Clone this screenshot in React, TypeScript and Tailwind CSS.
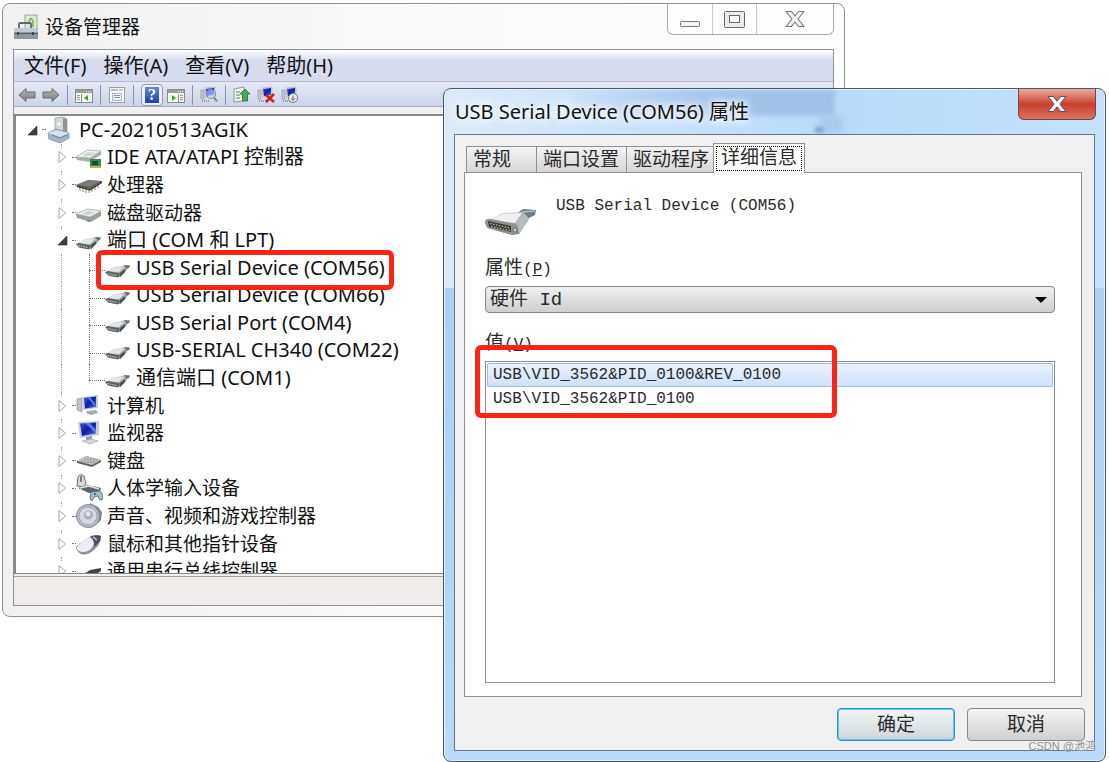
import { useState, type ReactNode } from 'react'
import clsx from 'clsx'

type NodeKind =
  | 'root'
  | 'ide'
  | 'cpu'
  | 'disk'
  | 'port'
  | 'computer'
  | 'monitor'
  | 'keyboard'
  | 'hid'
  | 'sound'
  | 'mouse'
  | 'usb'

interface TreeNode {
  label: string
  kind: NodeKind
  level: 0 | 1 | 2
  open?: boolean
  last?: boolean
  marked?: boolean
}

const nodes: TreeNode[] = [
  { label: 'PC-20210513AGIK', kind: 'root', level: 0, open: true },
  { label: 'IDE ATA/ATAPI 控制器', kind: 'ide', level: 1 },
  { label: '处理器', kind: 'cpu', level: 1 },
  { label: '磁盘驱动器', kind: 'disk', level: 1 },
  { label: '端口 (COM 和 LPT)', kind: 'port', level: 1, open: true },
  { label: 'USB Serial Device (COM56)', kind: 'port', level: 2, marked: true },
  { label: 'USB Serial Device (COM66)', kind: 'port', level: 2 },
  { label: 'USB Serial Port (COM4)', kind: 'port', level: 2 },
  { label: 'USB-SERIAL CH340 (COM22)', kind: 'port', level: 2 },
  { label: '通信端口 (COM1)', kind: 'port', level: 2, last: true },
  { label: '计算机', kind: 'computer', level: 1 },
  { label: '监视器', kind: 'monitor', level: 1 },
  { label: '键盘', kind: 'keyboard', level: 1 },
  { label: '人体学输入设备', kind: 'hid', level: 1 },
  { label: '声音、视频和游戏控制器', kind: 'sound', level: 1 },
  { label: '鼠标和其他指针设备', kind: 'mouse', level: 1 },
  { label: '通用串行总线控制器', kind: 'usb', level: 1 },
]

const menus = ['文件(F)', '操作(A)', '查看(V)', '帮助(H)']

const hardwareIds = ['USB\\VID_3562&PID_0100&REV_0100', 'USB\\VID_3562&PID_0100']

const tabs = [
  { label: '常规', width: 'w-[70px]' },
  { label: '端口设置', width: 'w-[90px]' },
  { label: '驱动程序', width: 'w-[87px]' },
  { label: '详细信息', width: 'w-[92px]' },
]

// Shared gradients for every icon on the page
function Gradients() {
  return (
    <svg width="0" height="0" className="absolute" aria-hidden="true">
      <defs>
        <linearGradient id="metal" x1="0" y1="0" x2="1" y2="1">
          <stop offset="0" stopColor="#f4f5f5" />
          <stop offset="0.5" stopColor="#b4b8ba" />
          <stop offset="1" stopColor="#5f6467" />
        </linearGradient>
        <linearGradient id="screen" x1="0" y1="0" x2="1" y2="1">
          <stop offset="0" stopColor="#3a55d8" />
          <stop offset="0.5" stopColor="#0a1cae" />
          <stop offset="1" stopColor="#4c7df0" />
        </linearGradient>
        <linearGradient id="arrow" x1="0" y1="0" x2="0" y2="1">
          <stop offset="0" stopColor="#b9b9b9" />
          <stop offset="1" stopColor="#7c7c7c" />
        </linearGradient>
      </defs>
    </svg>
  )
}

function DeviceArt({ kind }: { kind: NodeKind }) {
  switch (kind) {
    case 'root':
      return (
        <>
          <path d="M9 0 17 -1 21 1V16L12 17 9 14Z" fill="#d4d8da" stroke="#8f9598" strokeWidth="0.7" />
          <path d="M17 0 21 1V16L17 16Z" fill="#8f9497" />
          <circle cx="13" cy="6" r="1.5" fill="#fff" />
          <path d="M2 15 10 11 23 15 23 20 14 25 3 21Z" fill="#9db8c8" stroke="#6f8b9c" strokeWidth="0.7" />
          <path d="M2 15 10 12 23 15 14 19Z" fill="#d5e5ee" />
          <path d="M6 17 14 20M14 20 21 17" stroke="#5a7a8e" strokeWidth="0.8" fill="none" />
        </>
      )
    case 'ide':
      return (
        <>
          <path d="M0 12 11 5 25 6 25 10 13 17 1 15Z" fill="#a9aeac" />
          <path d="M0 12 11 5 25 6 14 13Z" fill="#eef0ee" stroke="#9ea3a1" strokeWidth="0.6" />
          <path d="M6 11 12 7 20 8 14 11Z" fill="#cfd4d1" />
          <path d="M14 14H25V23H14Z" fill="#3d8a41" />
          <path d="M16 16H22V20H16Z" fill="#1d4a52" />
          <path d="M14 21H25V23H14Z" fill="#c9b33c" />
        </>
      )
    case 'cpu':
      return (
        <>
          <path d="M4 14v4M7 15v4M10 16v4M13 16v4M16 15v4M19 13v4M22 11v4" stroke="#a49a72" strokeWidth="1.2" />
          <path d="M0 12 12 7 26 8 14 16Z" fill="#5c5a5a" />
          <path d="M2 11.500 12 7.500 24 8 14 14Z" fill="#7f7c7c" />
          <path d="M0 12 14 16 26 8V10L14 17.500 1 14Z" fill="#312f30" />
        </>
      )
    case 'disk':
      return (
        <>
          <path d="M0 13 11 8 25 10V15L15 21 1 17Z" fill="#9a9f9c" />
          <path d="M0 13 11 8 25 10 14 16Z" fill="#eceeed" stroke="#a5aaa7" strokeWidth="0.6" />
          <path d="M6 13 12 10 19 11 13 14Z" fill="#cdd2cf" />
          <path d="M11 19.500 14 20.200" stroke="#3fae45" strokeWidth="1.4" />
        </>
      )
    case 'computer':
      return (
        <>
          <path d="M1 5 6 4V18L1 16Z" fill="#bfc4c7" stroke="#7f8589" strokeWidth="0.6" />
          <path d="M6 3 22 1V14L7 16Z" fill="#c9ced4" />
          <path d="M8 4 20 2.500V13L9 14.500Z" fill="url(#screen)" />
          <path d="M12 4 14 3.500 19 10V12Z" fill="#8fb2f8" opacity="0.7" />
          <path d="M11 17 20 16 22 19 15 21 10 19Z" fill="#a5abb0" />
        </>
      )
    case 'monitor':
      return (
        <>
          <path d="M2 1 23 0V14L4 17Z" fill="#c9ced4" />
          <path d="M4 2.500 20 1.500V12.500L6 15Z" fill="url(#screen)" />
          <path d="M9 2 14 2 20 9V12.500Z" fill="#7fa6f6" opacity="0.65" />
          <path d="M10 16 16 15V19H10Z" fill="#999fa4" />
          <path d="M6 20 15 18 22 20 14 23Z" fill="#d2d6d9" stroke="#9aa0a4" strokeWidth="0.6" />
        </>
      )
    case 'keyboard':
      return (
        <>
          <path d="M1 12 10 7 25 11V13L16 18 1 14Z" fill="#5e6163" />
          <path d="M1 12 10 7 25 11 16 16Z" fill="#c3c6c8" />
          <path d="M5 12 18 14M8 10 20 13M11 9 22 11.500" stroke="#8d8f91" strokeWidth="1" strokeDasharray="2 1" />
        </>
      )
    case 'hid':
      return (
        <>
          <path d="M2 1Q4-3 8 0L10 8 7 11 1 10Z" fill="#d9dcdd" stroke="#6a6e70" strokeWidth="1" />
          <path d="M5 0V6" stroke="#55585a" strokeWidth="1.400" />
          <path d="M2 12 12 9 25 12 23 18 13 17Z" fill="#5f6365" />
          <path d="M4 12 13 10 23 13" stroke="#e1e4e5" strokeWidth="1.600" fill="none" />
          <path d="M15 16 24 15Q28 18 26 24L23 23 22 20 18 21 16 25 14 23Z" fill="#a6bcc4" stroke="#566a72" strokeWidth="0.8" />
          <circle cx="19" cy="18" r="1.200" fill="#1f7fae" />
        </>
      )
    case 'sound':
      return (
        <>
          <path d="M14-1 22 3 26 8 25 16 20 21 14 24Z" fill="#80848d" />
          <circle cx="12" cy="12" r="11.500" fill="#b7bcc7" stroke="#858b98" strokeWidth="1" />
          <circle cx="12" cy="12" r="9" fill="#d5d9e2" stroke="#9da4b3" strokeWidth="1" />
          <circle cx="12.500" cy="11" r="4.500" fill="#a7aebd" />
          <circle cx="12" cy="10" r="2.500" fill="#dfe3ea" />
        </>
      )
    case 'mouse':
      return (
        <>
          <path d="M15 4Q20 2 25 4 25 12 18 18 11 24 5 22 0 19 0 15 3 12 15 4Z" fill="#8d9098" />
          <path d="M14 5Q18 7 18 12 14 21 6 20 0 19 1 15 4 11 14 5Z" fill="#eceef1" />
          <path d="M14 5Q20 2 25 4L24 9 18 15Q19 8 14 5Z" fill="#4c4f56" />
          <path d="M17 5 21 8" stroke="#9fb3f0" strokeWidth="1.600" />
        </>
      )
    case 'usb':
      return <path d="M8 15 14 11 25 9V12L16 18 4 18Z" fill="#444" />
    default:
      return (
        <>
          <path d="M16 11 20 9 25 9.500 24 12 19 14Z" fill="#64707a" />
          <path d="M1 16 9 11 20 10 22 14 15 21 5 20Z" fill="url(#metal)" />
          <path d="M3 15 10 11.500 19 11 14 16Z" fill="#e4e7e8" />
          <path d="M0 16 3 15 15 17.500 13 21.500 3 19.500Z" fill="#5b6063" />
          <path d="M2.500 17.500 12 19.500" stroke="#c4c7bd" strokeWidth="1.200" strokeDasharray="1.500 1" />
          <path d="M15 17 20 13V16L15 21Z" fill="#4a4f52" />
        </>
      )
  }
}

function DeviceIcon({ kind }: { kind: NodeKind }) {
  return (
    <svg viewBox="0 0 26 24" className="h-6 w-[26px] shrink-0 overflow-visible" aria-hidden="true">
      <DeviceArt kind={kind} />
    </svg>
  )
}

function Expander({ open, label }: { open?: boolean; label: string }) {
  return (
    <button type="button" aria-label={label} className="relative z-10 h-4 w-[10px] shrink-0 bg-white">
      <svg viewBox="0 0 10 16" className="h-4 w-[10px]">
        {open ? (
          <path d="M9 4V13H0Z" fill="#404040" stroke="#222" strokeWidth="0.6" />
        ) : (
          <path d="M1 2.500V13.500L7.500 8Z" fill="#fff" stroke="#a6a6a6" strokeWidth="1" />
        )}
      </svg>
    </button>
  )
}

function TreeRow({ node }: { node: TreeNode }) {
  // Latin glyphs run small next to the CJK ones, so mixed labels go up a size
  const hasLatin = /[A-Z]/.test(node.label)

  return (
    <li
      className={clsx(
        'relative flex min-h-0 items-center',
        node.level === 0 && 'pl-[12px]',
        node.level === 1 && 'pl-[42px]',
        node.level === 2 && 'pl-[89px]'
      )}
    >
      {node.level > 0 && (
        <span
          className={clsx(
            'absolute left-[45px] border-l border-dotted border-gray-400',
            node.level === 2 ? 'inset-y-0' : 'top-0 h-1'
          )}
        />
      )}
      {node.level === 2 && (
        <>
          <span
            className={clsx(
              'absolute top-0 left-[73px] border-l border-dotted border-gray-500',
              node.last ? 'h-4' : 'bottom-0'
            )}
          />
          <span className="absolute top-4 left-[73px] w-4 border-t border-dotted border-gray-500" />
        </>
      )}
      {node.level < 2 && (
        <>
          <Expander open={node.open} label={node.label} />
          <span className="w-2 shrink-0 pl-1">
            <span className="block w-1 border-t border-dotted border-gray-500" />
          </span>
        </>
      )}
      <DeviceIcon kind={node.kind} />
      <span
        className={clsx(
          'whitespace-nowrap',
          hasLatin ? 'text-[20px] leading-6' : 'leading-6',
          node.level === 0 ? 'pl-[7px]' : 'pl-[5px]'
        )}
      >
        {node.label}
      </span>
      {node.marked && (
        <span className="absolute -top-1 left-[80px] z-20 h-10 w-[298px] rounded-md border-[5px] border-[#fb2414]" />
      )}
    </li>
  )
}

function ToolButton({ label, children }: { label: string; children: ReactNode }) {
  return (
    <button type="button" aria-label={label} className="flex h-5 w-[18px] items-center justify-center">
      <svg viewBox="0 0 18 18" className="h-[18px] w-[18px] overflow-visible">
        {children}
      </svg>
    </button>
  )
}

function Sep() {
  return <span className="mx-px h-5 w-px bg-[#8b93a5]" />
}

function PanelArt({ flip }: { flip?: boolean }) {
  return (
    <>
      <rect x="0.500" y="3.500" width="17" height="13" fill="#f7f7f4" stroke="#8d8d89" />
      <path d="M1 5.500H17" stroke="#9a9a96" strokeWidth="3" />
      <path d="M11 5.500H16" stroke="#efefef" strokeDasharray="1 1" />
      <path d={flip ? 'M11.500 8V16' : 'M6.500 8V16'} stroke="#8d8d89" />
      <path
        d={flip ? 'M13 9.500H16M13 11.500H16M13 13.500H16' : 'M2 9.500H5M2 11.500H5M2 13.500H5'}
        stroke="#999"
      />
      <path d={flip ? 'M5 9V15L9 12Z' : 'M13 9V15L9 12Z'} fill="#3fa52f" />
    </>
  )
}

function PcArt() {
  return (
    <>
      <path d="M1 4H4V13H1Z" fill="#c5c8cb" stroke="#8a8e92" strokeWidth="0.6" />
      <path d="M5 2 15 1V10L6 11Z" fill="#d3d7dd" stroke="#9ba1a9" strokeWidth="0.5" />
      <path d="M6 3 14 2V9L7 10Z" fill="url(#screen)" />
      <path d="M2 15H10" stroke="#999" strokeWidth="2" strokeDasharray="1 1" />
    </>
  )
}

function Toolbar() {
  return (
    <div className="flex h-[25px] items-end border-b border-[#a3aabb] bg-linear-to-b from-[#e4e9f5] to-[#ccd5e8] pl-1">
      <div className="flex items-center gap-1.5">
        <ToolButton label="后退">
          <path d="M1 9 8 2.500V6H17V12H8V15.500Z" fill="url(#arrow)" stroke="#6d6d6d" />
        </ToolButton>
        <ToolButton label="前进">
          <path d="M17 9 10 2.500V6H1V12H10V15.500Z" fill="url(#arrow)" stroke="#6d6d6d" />
        </ToolButton>
        <Sep />
        <ToolButton label="显示控制台树">
          <PanelArt />
        </ToolButton>
        <Sep />
        <ToolButton label="属性">
          <rect x="1.500" y="1.500" width="15" height="15" fill="#fafafa" stroke="#9d9d9d" />
          <path d="M3 4H10" stroke="#b9b9b9" strokeWidth="2" />
          <rect x="4.500" y="7.500" width="9" height="7" fill="#eef1f5" stroke="#b0b6bf" />
          <path d="M6 9.500H12M6 11.500H12M11 4H15" stroke="#8795ad" />
        </ToolButton>
        <Sep />
        <button
          type="button"
          aria-label="帮助"
          className="-mr-0.5 flex h-[22px] w-[22px] items-center justify-center rounded-sm border border-[#8e98ad] bg-[#eef2fa]"
        >
          <span className="flex h-4 w-[14px] items-center justify-center bg-linear-to-b from-[#6388dd] to-[#1b3fb0] font-['Liberation_Serif',serif] text-base font-bold text-white">
            ?
          </span>
        </button>
        <ToolButton label="显示操作窗格">
          <PanelArt flip />
        </ToolButton>
        <Sep />
        <ToolButton label="扫描检测硬件改动">
          <PcArt />
          <circle cx="11" cy="8" r="4.500" fill="#cfe0fb" fillOpacity="0.6" stroke="#7e8fae" strokeWidth="1.200" />
          <path d="M14 11.500 17 15.500" stroke="#8a8070" strokeWidth="2" />
        </ToolButton>
        <Sep />
        <ToolButton label="更新驱动程序">
          <path d="M1 3 11 1V15L1 16Z" fill="#f1f3f1" stroke="#7f8581" strokeWidth="0.800" />
          <path d="M3 6H7M3 9H7M3 12H7" stroke="#4f8f55" />
          <path d="M12 3 17 8H14.500V15H9.500V8H7Z" fill="#4aa65a" stroke="#247036" strokeWidth="0.800" />
        </ToolButton>
        <ToolButton label="卸载">
          <PcArt />
          <path d="M9 9 17 16M17 8 9 16" stroke="#d0201c" strokeWidth="2.600" />
        </ToolButton>
        <ToolButton label="禁用">
          <PcArt />
          <circle cx="12" cy="12" r="4.500" fill="#f0f0f0" stroke="#77797c" />
          <path d="M12 9.500V14M10 12.500 12 14.500 14 12.500" stroke="#555" fill="none" />
        </ToolButton>
      </div>
    </div>
  )
}

function CrossGlyph({ light }: { light?: boolean }) {
  return (
    <svg viewBox="0 0 20 18" className="h-[18px] w-5">
      <path
        d="M1 1.500H6.500L10 6 13.500 1.500H19L13 9 19 16.500H13.500L10 12 6.500 16.500H1L7 9Z"
        fill={light ? '#fff' : '#f0f0f2'}
        stroke={light ? '#6d4b55' : '#73757d'}
        strokeWidth="1.100"
        strokeLinejoin="round"
      />
    </svg>
  )
}

function DeviceManager() {
  return (
    <section className="absolute top-[3px] right-[264px] left-[2px] rounded-lg border border-[#8f9194] bg-linear-to-r from-[#f1f1f1] via-[#fafafa] to-[#fdfdfd] px-[10px] pb-[10px]">
      <header className="flex h-[45px] items-start justify-between">
        <div className="flex h-[46px] items-center gap-[6px]">
          <svg viewBox="0 0 26 26" className="h-[26px] w-[26px]" aria-hidden="true">
            <path d="M12 1H24V20H12Z" fill="#dfe8d6" stroke="#9ba694" />
            <path d="M16 8Q18 1 20 8V13" fill="none" stroke="#6fae55" strokeWidth="1.500" />
            <path d="M6 14V10Q6 9 8 9H16Q18 9 18 10V14" fill="none" stroke="#5b656c" strokeWidth="1.800" />
            <path d="M2 14H22L25 18V25H1V18Z" fill="#8d999f" />
            <path d="M2 14H22L25 18H1Z" fill="#c2cbd0" />
            <path d="M1 19.500H25" stroke="#59646b" />
            <path d="M5 18V21M20 18V21" stroke="#3f484e" strokeWidth="2" />
          </svg>
          <h1 className="leading-6">设备管理器</h1>
        </div>
        <div className="flex h-[31px] rounded-b-md border border-t-0 border-[#a9abae] bg-[#fdfdfd]">
          <button type="button" aria-label="最小化" className="flex w-[45px] items-center justify-center border-r border-[#c6c8ca]">
            <svg viewBox="0 0 20 18" className="h-[18px] w-5">
              <rect x="0.500" y="11.500" width="19" height="5" rx="1" fill="#f4f4f4" stroke="#75777c" />
            </svg>
          </button>
          <button type="button" aria-label="最大化" className="flex w-11 items-center justify-center border-r border-[#c6c8ca]">
            <svg viewBox="0 0 22 18" className="h-[18px] w-[22px]">
              <rect x="0.500" y="1.500" width="20" height="16" rx="1" fill="#ececee" stroke="#66686e" />
              <rect x="5.500" y="5.500" width="10" height="7" fill="#fff" stroke="#66686e" />
            </svg>
          </button>
          <button type="button" aria-label="关闭" className="flex w-[76px] items-center justify-center">
            <CrossGlyph />
          </button>
        </div>
      </header>

      <div className="border border-[#8e9095] bg-[#f0f0f0]">
        <nav className="flex h-8 items-center gap-[17px] border-b border-[#b4bacb] bg-linear-to-b from-white from-0% via-[#d5daec] via-35% to-[#d7dcef] pl-[10px] text-[20px]">
          {menus.map((m) => (
            <button key={m} type="button" className="leading-6">
              {m}
            </button>
          ))}
        </nav>
        <Toolbar />
        <div className="mt-[7px] h-[460px] overflow-hidden border-t-2 border-b border-l-2 border-[#85878a] bg-white">
          <ul className="grid h-[469px] auto-rows-fr">
            {nodes.map((n) => (
              <TreeRow key={n.label} node={n} />
            ))}
          </ul>
        </div>
        <footer className="mt-[2px] h-[29px] border-t border-[#a3a3a3] bg-[#efedec]" />
      </div>
    </section>
  )
}

function PropertiesDialog() {
  const [tab, setTab] = useState('详细信息')
  const [selected, setSelected] = useState(0)

  return (
    <section className="absolute top-[88px] right-[3px] bottom-0 left-[443px] flex flex-col overflow-hidden rounded-lg border border-[#4c5866] bg-linear-to-b from-[#aaccf0] via-[#aed2f3] to-[#b9dafb] shadow-[inset_0_0_0_1px_#e3f1ff]">
      {/* Glass reflections and the blurred edge of the window behind */}
      <span className="absolute inset-x-px top-px h-[198px] bg-linear-to-r from-[#dceaf8] from-0% via-[#b9dbfa] via-60% to-[#c6e1fb]" />
      <span className="absolute top-px right-[270px] left-[120px] h-[26px] bg-linear-to-r from-transparent to-[#a2c1e8] to-60% blur-[2px]" />
      <span className="absolute top-[27px] right-[262px] h-[18px] w-[24px] bg-[#a9caee] blur-[3px]" />
      <span className="absolute top-[39px] right-[282px] h-1 w-2 bg-[#6f8bb0] blur-[2px]" />

      <header className="relative flex h-[45px] shrink-0 items-start justify-between pr-[9px] pl-[11px]">
        <h2 className="flex h-[46px] items-center text-[20px] leading-6 [text-shadow:0_0_6px_#fff,0_0_10px_#fff,0_0_14px_#fff]">
          USB Serial Device (COM56) 属性
        </h2>
        <button
          type="button"
          aria-label="关闭"
          className="flex h-[31px] w-[78px] items-center justify-center rounded-b-md border border-t-0 border-[#7a4248] bg-linear-to-b from-[#e8aca2] from-0% via-[#c93f2c] via-50% to-[#d9735f]"
        >
          <CrossGlyph light />
        </button>
      </header>

      <div className="relative mx-[10px] mb-[10px] flex flex-1 flex-col border border-[#65788c] bg-[#f0f0f0] px-[9px] font-['Liberation_Mono','Noto_Sans_CJK_SC',monospace] text-base text-[#2a2a2a]">
        <div role="tablist" className="flex h-[37px] shrink-0 items-end pl-[2px]">
          {tabs.map((t) => (
            <button
              key={t.label}
              type="button"
              role="tab"
              aria-selected={tab === t.label}
              onClick={() => setTab(t.label)}
              className={clsx(
                'border border-[#8f9194] text-[19px] leading-6',
                t.width,
                tab === t.label
                  ? 'relative z-10 -mb-px h-[30px] border-b-0 bg-white p-[2px]'
                  : 'h-[26px] border-r-0 border-b-0 bg-linear-to-b from-[#f3f3f3] to-[#d6d6d6] pt-[2px] pl-[6px] text-left'
              )}
            >
              {tab === t.label ? (
                <span className="flex h-full items-center justify-center border border-dotted border-black">
                  {t.label}
                </span>
              ) : (
                t.label
              )}
            </button>
          ))}
        </div>

        <div className="mr-[3px] flex flex-1 flex-col border border-[#8f9194] bg-white pr-[26px] pb-[13px] pl-5">
          <div className="flex pt-[21px]">
            <svg viewBox="0 0 52 34" className="mt-[14px] h-[34px] w-[52px]" aria-hidden="true">
              <path d="M31 6 38 1 51 2 50 7 42 11Z" fill="#6f7b85" />
              <path d="M37 4 50 3" stroke="#b6c0c8" strokeWidth="1.500" />
              <path d="M1 14 17 5 38 4 44 11 34 26 27 27 2 20Z" fill="url(#metal)" />
              <path d="M5 12 18 6 37 5 30 15Z" fill="#eef0f1" />
              <path d="M30 15 40 6 44 11 34 26Z" fill="#b7bcbf" />
              <path d="M0 13Q2 10 6 11L31 16Q35 19 33 25L28 27 3 20Q0 18 0 13Z" fill="#8d9294" />
              <path d="M3 13 26 18V24L4 19Z" fill="#3a3b31" />
              <path d="M5 15.500 25 20M6 18.500 25 22.500" stroke="#c9c594" strokeWidth="1.200" strokeDasharray="1.500 1.500" />
              <circle cx="30" cy="22" r="2" fill="#d7dadb" stroke="#63686b" />
            </svg>
            <p className="pl-[19px] leading-6">USB Serial Device (COM56)</p>
          </div>

          <label htmlFor="property" className="mt-[15px] leading-6">
            <span className="text-[19px]">属性</span>(<u>P</u>)
          </label>
          <div className="relative mt-1">
            <select
              id="property"
              className="h-[27px] w-full appearance-none rounded-sm border border-[#85878a] bg-linear-to-b from-[#f0f0f0] to-[#cfcfcf] pl-[4px] text-[19px] leading-6"
            >
              <option>硬件 Id</option>
            </select>
            <svg viewBox="0 0 12 6" className="pointer-events-none absolute top-[11px] right-[8px] h-[6px] w-3">
              <path d="M0 0H12L6 6Z" fill="#000" />
            </svg>
          </div>

          <p id="value-label" className="mt-[19px] leading-6">
            <span className="text-[19px]">值</span>(<u>V</u>)
          </p>
          <div className="relative mt-1 flex flex-1">
            <ul
              role="listbox"
              aria-labelledby="value-label"
              className="flex-1 border border-[#8f9194] p-px"
            >
              {hardwareIds.map((id, i) => (
                <li
                  key={id}
                  role="option"
                  aria-selected={selected === i}
                  onClick={() => setSelected(i)}
                  className={clsx(
                    'h-6 rounded-xs border pl-[5px] leading-[22px]',
                    selected === i
                      ? 'border-[#9dbde4] bg-linear-to-b from-[#ebf3fe] to-[#cfe1fb]'
                      : 'border-transparent'
                  )}
                >
                  {id}
                </li>
              ))}
            </ul>
            <span className="pointer-events-none absolute -top-[16px] -left-[10px] h-[73px] w-[362px] rounded-md border-[5px] border-[#fb2414]" />
          </div>
        </div>

        <div className="flex h-[53px] shrink-0 items-center justify-end gap-3 pt-px text-[19px]">
          <button
            type="button"
            className="h-[33px] w-[118px] rounded-sm border border-[#3a8fc0] bg-linear-to-b from-[#f3f6f7] to-[#cfd6da] pt-[3px] leading-6 shadow-[inset_0_0_0_1px_#5cc8f0]"
          >
            确定
          </button>
          <button
            type="button"
            className="h-[33px] w-[118px] rounded-sm border border-[#85878a] bg-linear-to-b from-[#f4f4f4] to-[#d0d0d0] pt-[3px] leading-6"
          >
            取消
          </button>
        </div>
      </div>
    </section>
  )
}

export default function App() {
  return (
    <main className="relative min-h-screen overflow-hidden bg-white font-['Noto_Sans','Noto_Sans_CJK_SC',sans-serif] text-[19px] text-[#111]">
      <Gradients />
      <DeviceManager />
      <PropertiesDialog />
      <small className="absolute right-[13px] bottom-[8px] font-['Liberation_Sans','Noto_Sans_CJK_SC',sans-serif] text-[11px] leading-4 text-[#8c8c8c] [text-shadow:0_0_1px_#fff]">
        CSDN @池鸿
      </small>
    </main>
  )
}
